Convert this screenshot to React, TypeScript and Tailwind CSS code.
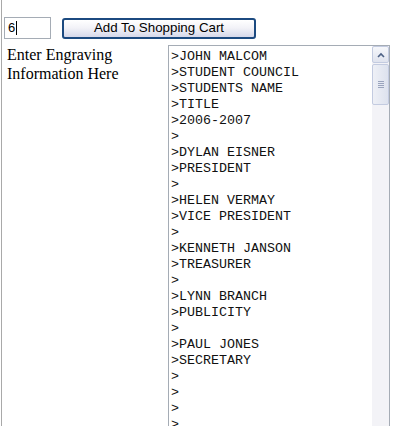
const lines = [
  '>JOHN MALCOM',
  '>STUDENT COUNCIL',
  '>STUDENTS NAME',
  '>TITLE',
  '>2006-2007',
  '>',
  '>DYLAN EISNER',
  '>PRESIDENT',
  '>',
  '>HELEN VERMAY',
  '>VICE PRESIDENT',
  '>',
  '>KENNETH JANSON',
  '>TREASURER',
  '>',
  '>LYNN BRANCH',
  '>PUBLICITY',
  '>',
  '>PAUL JONES',
  '>SECRETARY',
  '>',
  '>',
  '>',
  '>',
  '>',
];

function ScrollBar() {
  return (
    <div className="flex w-[17px] shrink-0 flex-col bg-[#f3f3f7]">
      <div className="flex h-[17px] items-center justify-center rounded-[2px] border border-[#c3cbe0] bg-[linear-gradient(#f6f7fb,#dfe3ee)]">
        <svg width="8" height="6" viewBox="0 0 8 6">
          <path d="M1 5 L4 2 L7 5" fill="none" stroke="#4d6185" strokeWidth="1.6" />
        </svg>
      </div>
      <div className="mt-px flex h-[41px] items-center justify-center rounded-[2px] border border-[#c3cbe0] bg-[linear-gradient(90deg,#eef0f6,#dde2ee)]">
        <div className="flex flex-col gap-[1px]">
          <div className="h-px w-[6px] bg-[#9aa4bd]" />
          <div className="h-px w-[6px] bg-[#9aa4bd]" />
          <div className="h-px w-[6px] bg-[#9aa4bd]" />
          <div className="h-px w-[6px] bg-[#9aa4bd]" />
        </div>
      </div>
      <div className="flex-1" />
      <div className="flex h-[17px] items-center justify-center rounded-[2px] border border-[#c3cbe0] bg-[linear-gradient(#f6f7fb,#dfe3ee)]">
        <svg width="8" height="6" viewBox="0 0 8 6">
          <path d="M1 1 L4 4 L7 1" fill="none" stroke="#4d6185" strokeWidth="1.6" />
        </svg>
      </div>
    </div>
  );
}

export default function App() {
  return (
    <div className="h-[426px] overflow-hidden bg-white pl-px">
      <div className="flex h-full flex-col border-l border-[#a9a9a9] pl-[2px] pt-[17px]">
        <div className="flex items-center gap-[11px]">
          <div className="flex h-[22px] w-[47px] items-center border border-[#a5acb5] px-[3px] font-['Liberation_Sans',sans-serif] text-[13px] text-black">
            6<span className="ml-px h-[14px] w-px bg-black" />
          </div>
          <button className="flex h-[21px] w-[194px] items-center justify-center rounded-[3px] border-2 border-[#1c4a80] bg-[linear-gradient(#ffffff,#f3f3f8_45%,#d6d8ea)] font-['Liberation_Sans',sans-serif] text-[13.33px] text-black">
            Add To Shopping Cart
          </button>
        </div>
        <div className="mt-[6px] flex min-h-0 flex-1">
          <div className="w-[164px] shrink-0 pl-[3px] font-['Liberation_Serif',serif] text-[16px] leading-[19px] text-black">
            Enter Engraving
            <br />
            Information Here
          </div>
          <div className="flex h-[400px] w-[222px] shrink-0 overflow-hidden border border-[#a5acb5]">
            <div className="flex-1 overflow-hidden pl-[2px] pt-[3px] font-['Liberation_Mono',monospace] text-[13.33px] leading-[16px] text-[#111]">
              {lines.map((l, i) => (
                <div key={i} className="whitespace-pre">
                  {l}
                </div>
              ))}
            </div>
            <ScrollBar />
          </div>
        </div>
      </div>
    </div>
  );
}
